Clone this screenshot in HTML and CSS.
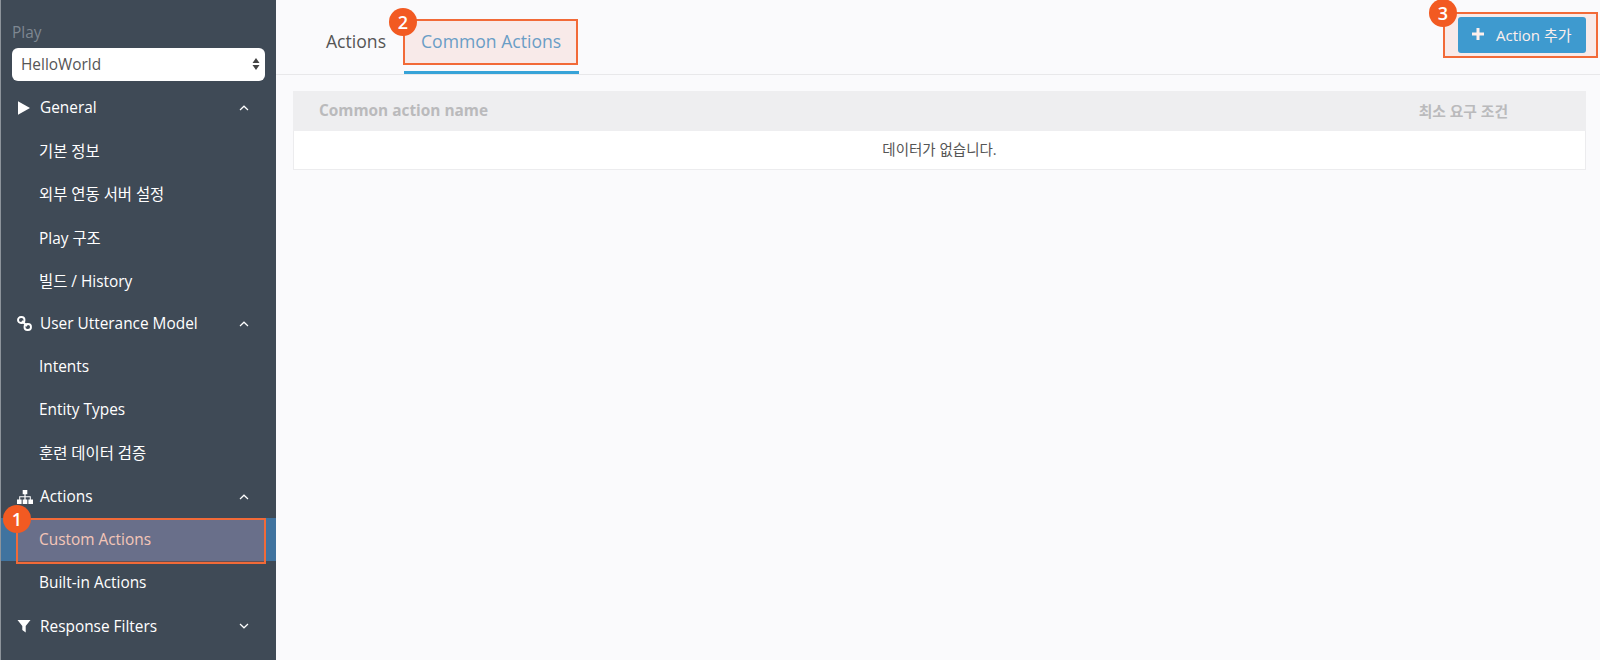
FILE: index.html
```html
<!DOCTYPE html>
<html lang="ko">
<head>
<meta charset="utf-8">
<title>Common Actions</title>
<link rel="stylesheet" href="styles.css">
</head>
<body>
<div class="app">
  <aside class="sidebar">
    <div class="play-label">Play</div>
    <div class="select">
      <span>HelloWorld</span>
      <svg class="updown" width="8" height="14" viewBox="0 0 8 14"><path d="M4 1 7.500 6H.5zM4 13 .5 8h7z" fill="#444"/></svg>
    </div>
    <nav class="nav">
      <div class="row head">
        <span class="ico"><svg width="14" height="14" viewBox="0 0 14 14"><path d="M1 .3 13 7 1 13.700z" fill="#fff"/></svg></span>
        <span class="lbl">General</span>
        <svg class="chev" width="10" height="6" viewBox="0 0 10 6"><path d="M1 5 5 1.200 9 5" fill="none" stroke="#fff" stroke-width="1.200"/></svg>
      </div>
      <div class="row sub">기본 정보</div>
      <div class="row sub">외부 연동 서버 설정</div>
      <div class="row sub">Play 구조</div>
      <div class="row sub">빌드 / History</div>
      <div class="row head">
        <span class="ico"><svg width="15" height="15" viewBox="0 0 15 15"><g fill="none" stroke="#fff" stroke-width="1.900"><rect x="1" y="1" width="6.500" height="6" rx="3"/><rect x="7.500" y="8" width="6.500" height="6" rx="3"/><path d="M5 5 10 10"/></g></svg></span>
        <span class="lbl">User Utterance Model</span>
        <svg class="chev" width="10" height="6" viewBox="0 0 10 6"><path d="M1 5 5 1.200 9 5" fill="none" stroke="#fff" stroke-width="1.200"/></svg>
      </div>
      <div class="row sub">Intents</div>
      <div class="row sub">Entity Types</div>
      <div class="row sub">훈련 데이터 검증</div>
      <div class="row head">
        <span class="ico"><svg width="16" height="14" viewBox="0 0 16 14"><path d="M5.700 0h4.600v4.300H8.600v2h5.200v3.200H16V14h-4.600V9.500h1.400V7.300H8.600V9.500H10.300V14H5.700V9.500H7.400V7.300H3.200V9.500H4.600V14H0V9.500H2.200V6.300H7.400V4.300H5.700z" fill="#fff"/></svg></span>
        <span class="lbl">Actions</span>
        <svg class="chev" width="10" height="6" viewBox="0 0 10 6"><path d="M1 5 5 1.200 9 5" fill="none" stroke="#fff" stroke-width="1.200"/></svg>
      </div>
      <div class="row sub active">Custom Actions</div>
      <div class="row sub">Built-in Actions</div>
      <div class="row head">
        <span class="ico"><svg width="14" height="14" viewBox="0 0 14 14"><path d="M.5 1h13L8.700 7v6.500L5.300 11V7z" fill="#fff"/></svg></span>
        <span class="lbl">Response Filters</span>
        <svg class="chev" width="10" height="6" viewBox="0 0 10 6"><path d="M1 1 5 4.800 9 1" fill="none" stroke="#fff" stroke-width="1.200"/></svg>
      </div>
    </nav>
    <div class="mark mark-side"></div>
    <div class="badge badge-1">1</div>
  </aside>
  <main class="main">
    <header class="topbar">
      <div class="tabs">
        <div class="tab">Actions</div>
        <div class="tab selected">Common Actions</div>
      </div>
      <button class="add-btn">
        <svg width="12" height="12" viewBox="0 0 12 12"><path d="M4.500 0h3v4.500H12v3H7.500V12h-3V7.500H0v-3h4.500z" fill="#fff"/></svg>
        <span class="add-label">Action 추가</span>
      </button>
    </header>
    <section class="content">
      <div class="table">
        <div class="thead">
          <span class="th-name">Common action name</span>
          <span class="th-req">최소 요구 조건</span>
        </div>
        <div class="empty">데이터가 없습니다.</div>
      </div>
    </section>
    <div class="mark mark-tab"></div>
    <div class="mark mark-btn"></div>
    <div class="badge badge-2">2</div>
    <div class="badge badge-3">3</div>
  </main>
</div>
</body>
</html>
```
FILE: styles.css
```css
* { box-sizing: border-box; }
html, body { margin: 0; height: 100%; overflow: hidden; }
body { font-family: "Open Sans", "Noto Sans CJK KR", sans-serif; font-size: 15.400px; color: #555; background: #fafafc; }
.app { display: flex; height: 660px; }

.sidebar { position: relative; width: 276px; flex: none; background: #3f4a56; border-left: 1px solid #8d949b; padding-top: 22px; }
.play-label { margin-left: 11px; font-size: 15.400px; line-height: 22px; color: #7e8791; }
.select { display: flex; align-items: center; justify-content: space-between; margin: 4px 11px 0; height: 33px; padding: 0 5px 1px 9px; background: #fff; border-radius: 6px; color: #555; }
.nav { margin-top: 5.400px; }
.row { display: flex; align-items: center; height: 43.200px; color: #fff; }
.sub { padding-left: 38px; padding-bottom: 1px; }
.head { padding-left: 16px; }
.ico { display: flex; width: 23px; flex: none; }
.lbl { flex: 1; }
.chev { margin-right: 27px; }
.active { background: #40739f; color: #f7e4dc; }

.main { position: relative; flex: 1; min-width: 0; display: flex; flex-direction: column; }
.topbar { display: flex; justify-content: space-between; height: 75px; border-bottom: 1px solid #e8e8ea; }
.tabs { display: flex; margin-left: 30px; }
.tab { display: flex; align-items: center; height: 74px; padding: 8px 17px 0; font-size: 17.600px; color: #555; }
.tab:first-child { padding: 8px 18px 0 20px; }
.selected { color: #5ba5d5; border-bottom: 3px solid #37a3d8; padding-top: 11px; width: 175px; }
.add-btn { display: flex; align-items: center; gap: 12px; align-self: flex-start; margin: 17px 14px 0 0; width: 128px; height: 36px; padding: 0 0 2px 14px; background: #2ba1df; border: 0; border-radius: 3px; color: #fff; font: 15px "Open Sans", "Noto Sans CJK KR", sans-serif; }
.add-label { white-space: nowrap; }

.content { padding: 16px 14px 0 17px; }
.table { border: 1px solid #ececee; background: #fff; }
.thead { display: flex; justify-content: space-between; align-items: center; height: 40px; padding-bottom: 2px; background: #eeeef0; font-weight: 700; color: #bababc; margin: -1px -1px 0 -1px; }
.th-name { margin-left: 26px; }
.th-req { margin-right: 78px; font-size: 14.800px; }
.empty { height: 38px; padding-bottom: 3px; display: flex; align-items: center; justify-content: center; font-size: 14.500px; color: #555; }

.mark { position: absolute; border: 2px solid #f26a38; }
.mark-side { left: 15px; top: 518px; width: 250px; height: 46px; background: rgba(240, 100, 70, 0.24); }
.mark-tab { left: 127px; top: 19px; width: 175px; height: 46px; background: rgba(240, 100, 70, 0.1); }
.mark-btn { right: 2px; top: 12px; width: 155px; height: 46px; background: rgba(240, 100, 70, 0.1); }
.badge { position: absolute; width: 28px; height: 28px; border-radius: 50%; background: #f25a22; color: #fff; font-size: 18px; font-weight: 600; line-height: 28px; text-align: center; }
.badge-1 { left: 2px; top: 505px; }
.badge-2 { left: 113px; top: 8px; }
.badge-3 { left: 1153px; top: -1px; }
```
